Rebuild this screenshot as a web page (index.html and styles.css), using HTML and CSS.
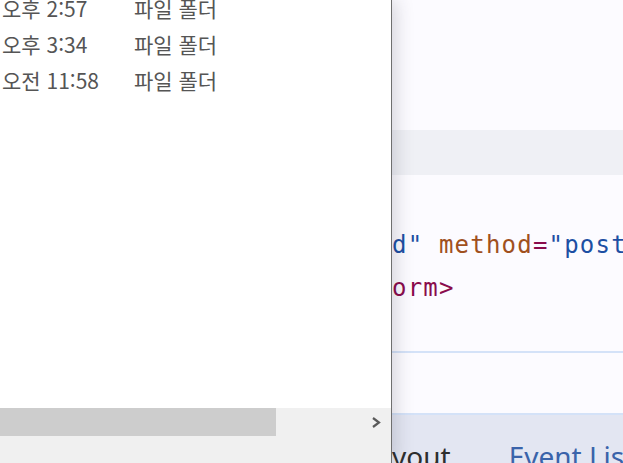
FILE: index.html
```html
<!DOCTYPE html>
<html lang="ko">
<head>
<meta charset="utf-8">
<title>Explorer over DevTools</title>
<link rel="stylesheet" href="styles.css">
</head>
<body>
<div class="screen">
  <aside class="explorer">
    <div class="rows">
      <div class="row"><span class="date">오후 2:57</span><span class="type">파일 폴더</span></div>
      <div class="row"><span class="date">오후 3:34</span><span class="type">파일 폴더</span></div>
      <div class="row"><span class="date">오전 11:58</span><span class="type">파일 폴더</span></div>
    </div>
    <div class="hscroll">
      <div class="thumb"></div>
      <div class="arrow">
        <svg width="10" height="11" viewBox="0 0 10 11"><path d="M2 1 L8 5.5 L2 10" fill="none" stroke="#5a5a5a" stroke-width="2.2"/></svg>
      </div>
    </div>
    <div class="status"></div>
  </aside>
  <main class="devtools">
    <div class="pane-top"></div>
    <div class="band"></div>
    <div class="code">
      <div class="line"><span class="val">d"</span> <span class="attr">method</span><span class="tag">=</span><span class="val">"post</span></div>
      <div class="line"><span class="tag">orm&gt;</span></div>
    </div>
    <div class="pane-mid"></div>
    <div class="tabs">
      <span class="tab">yout</span>
      <span class="tab tab-active">Event Listeners</span>
    </div>
  </main>
</div>
</body>
</html>
```

FILE: styles.css
```css
html, body {
  margin: 0;
  padding: 0;
  overflow: hidden;
}
body {
  width: 623px;
  height: 463px;
  background: #fcfbff;
}
.screen {
  display: flex;
  width: 623px;
  height: 463px;
}
.explorer {
  position: relative;
  z-index: 2;
  width: 391px;
  flex: none;
  background: #ffffff;
  border-right: 1px solid #6f6f6f;
  box-shadow: 3px 0 18px rgba(40, 40, 60, 0.2);
  display: flex;
  flex-direction: column;
  font-family: "Noto Sans CJK KR", "Noto Sans", sans-serif;
  font-size: 21px;
  color: #555555;
}
.rows {
  flex: 1;
  margin-top: -10px;
}
.row {
  display: grid;
  grid-template-columns: 132px auto;
  padding-left: 2px;
  line-height: 36px;
  height: 36px;
  white-space: nowrap;
}
.hscroll {
  flex: none;
  display: flex;
  align-items: center;
  height: 28px;
  background: #f0f0f0;
}
.thumb {
  width: 276px;
  height: 28px;
  background: #cdcdcd;
}
.arrow {
  margin-left: auto;
  width: 20px;
  height: 28px;
  display: flex;
  align-items: center;
  justify-content: flex-start;
}
.status {
  flex: none;
  height: 27px;
  background: #f0f0f0;
}
.devtools {
  flex: 1;
  min-width: 0;
  overflow: hidden;
  display: flex;
  flex-direction: column;
  background: #fcfbff;
}
.pane-top {
  flex: none;
  height: 130px;
}
.band {
  flex: none;
  height: 45px;
  background: #eff0f5;
}
.code {
  flex: none;
  height: 178px;
  box-sizing: border-box;
  padding-top: 49px;
  border-bottom: 2px solid #d4e2f8;
  font-family: "DejaVu Sans Mono", monospace;
  font-size: 24px;
  letter-spacing: 1.2px;
  line-height: 43px;
}
.code .line {
  height: 43px;
  white-space: pre;
}
.val { color: #1d4fa3; }
.attr { color: #a0501e; }
.tag { color: #8a0c4c; }
.pane-mid {
  flex: none;
  height: 62px;
  box-sizing: border-box;
  border-bottom: 2px solid #d4e2f8;
}
.tabs {
  flex: 1;
  background: #e3e6f2;
  padding-top: 22px;
  display: flex;
  gap: 58px;
  white-space: nowrap;
  font-family: "Noto Sans", sans-serif;
  font-size: 28px;
  line-height: normal;
}
.tab {
  color: #2e2e2e;
}
.tab-active {
  color: #3a63aa;
}
```
